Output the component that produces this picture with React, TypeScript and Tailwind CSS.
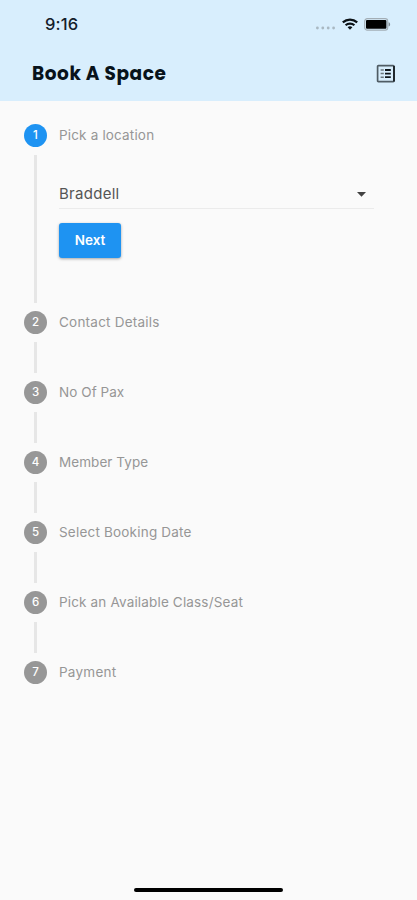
import { clsx } from "clsx";

const steps = [
    { title: "Pick a location", spacing: "tracking-[0.17px]" },
    { title: "Contact Details", spacing: "tracking-[0.23px]" },
    { title: "No Of Pax", spacing: "tracking-[0.06px]" },
    { title: "Member Type", spacing: "tracking-[0.06px]" },
    { title: "Select Booking Date", spacing: "tracking-[0.2px]" },
    { title: "Pick an Available Class/Seat", spacing: "tracking-[0.16px]" },
    { title: "Payment", spacing: "tracking-[0.24px]" },
];

function StatusBar() {
    return (
        <div className="flex h-12 items-center justify-between pl-[45px] pr-[26px]">
            <span className="text-[16.5px] font-medium tracking-[0.15px] text-[#14202a]">9:16</span>
            <div className="flex items-center">
                <svg width="20" height="4" viewBox="0 0 20 4" className="mr-[6px] mt-[8px]" fill="#a9b8c2">
                    <circle cx="1.4" cy="2" r="1.4" />
                    <circle cx="6.8" cy="2" r="1.4" />
                    <circle cx="12.2" cy="2" r="1.4" />
                    <circle cx="17.6" cy="2" r="1.4" />
                </svg>
                <svg width="16" height="12" viewBox="0 0 16 12" className="mr-[6px]" fill="none" stroke="#0b1116" strokeWidth="2.2">
                    <path d="M.8 4.3C5 .6 11 .6 15.2 4.3" />
                    <path d="M3.6 7.3C6 5 10 5 12.4 7.3" />
                    <path d="M5.6 9.3C7 8 9 8 10.4 9.3L8 11.7z" fill="#0b1116" stroke="none" />
                </svg>
                <svg width="27" height="13" viewBox="0 0 27 13">
                    <rect x=".7" y=".7" width="23" height="11.4" rx="2.6" fill="none" stroke="#a3aeb6" strokeWidth="1.2" />
                    <rect x="2" y="2" width="20.4" height="8.8" rx="1" fill="#000" />
                    <path d="M24.6 4.2c2 .5 2 3.9 0 4.4z" fill="#7c8992" />
                </svg>
            </div>
        </div>
    );
}

function ListIcon() {
    return (
        <svg width="20" height="20" viewBox="0 0 20 20" fill="none">
            <rect x="1.6" y="1.6" width="16.4" height="16" rx=".8" stroke="#4f5c65" strokeWidth="1.7" />
            <path d="M18 2v15.5" stroke="#10171c" strokeWidth="1.6" />
            <path d="M4.6 6h3.2M4.6 9.6h3.2M4.6 13.2h3.2" stroke="#6a767e" strokeWidth="1.5" />
            <path d="M9 6h5.8M9 9.6h5.8M9 13.2h5.8" stroke="#10171c" strokeWidth="1.8" />
        </svg>
    );
}

function LocationForm() {
    return (
        <div className="mt-[28px] w-[315px]">
            <button className="flex h-[34px] w-full items-center justify-between border-b border-[#ebebeb] pr-2">
                <span className="mt-[6px] text-[15px] tracking-[0.28px] text-[#555555]">Braddell</span>
                <svg width="9" height="5" viewBox="0 0 9 5" className="mt-[5px]" fill="#424242">
                    <path d="M0 0h9L4.5 4.7z" />
                </svg>
            </button>
            <button className="mt-[14px] h-[35px] w-[62px] rounded-[3px] bg-[#1e93f2] text-[13.5px] font-semibold text-white shadow-[0_1px_3px_rgba(0,0,0,0.35)]">
                Next
            </button>
        </div>
    );
}

export default function App() {
    return (
        <div className="flex h-[900px] w-[417px] flex-col bg-[#fafafa] font-['Inter',sans-serif]">
            <header className="h-[101px] bg-[#d8eefd]">
                <StatusBar />
                <div className="flex h-[51px] items-center justify-between pl-8 pr-[21px]">
                    <h1 className="font-['Poppins','Inter',sans-serif] text-[18.5px] font-bold tracking-[0.55px] text-[#08131b]">
                        Book A Space
                    </h1>
                    <ListIcon />
                </div>
            </header>

            <main className="flex-1 pt-[22px]">
                {steps.map((step, i) => (
                    <div key={step.title} className={clsx("flex pl-6", i === 0 ? "h-[187px]" : "h-[70px]")}>
                        <div className="flex w-[23px] flex-col items-center pt-px">
                            <div
                                className={clsx(
                                    "flex size-[23px] shrink-0 items-center justify-center rounded-full text-[11.5px] font-medium text-white",
                                    i === 0 ? "bg-[#1e93f2]" : "bg-[#979797]"
                                )}
                            >
                                {i + 1}
                            </div>
                            {i < steps.length - 1 && <div className="mb-[7px] mt-[8px] w-[3px] flex-1 bg-[#e6e6e6]" />}
                        </div>
                        <div className="pl-3">
                            <h2 className={clsx("h-6 whitespace-nowrap text-[13.5px] leading-6 text-[#969696]", step.spacing)}>
                                {step.title}
                            </h2>
                            {i === 0 && <LocationForm />}
                        </div>
                    </div>
                ))}
            </main>

            <footer className="flex justify-center pb-[8px]">
                <div className="h-[4px] w-[149px] rounded-full bg-black" />
            </footer>
        </div>
    );
}
